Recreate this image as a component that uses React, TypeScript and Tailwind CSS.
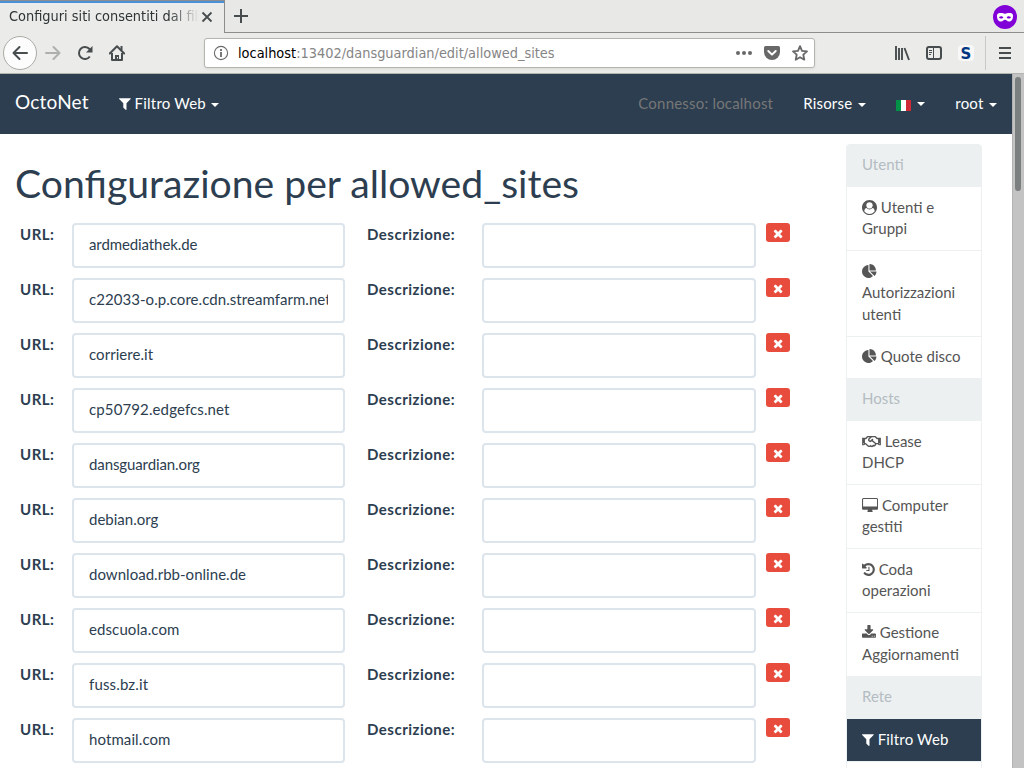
import type { ReactNode } from "react";
import { FaRegHandshake } from "react-icons/fa";

const glyphs = {
  filter: {
    x: 192,
    w: 1408,
    d: "M1595 295q17 41-14 70l-493 493v742q0 42-39 59-13 5-25 5-27 0-45-19l-256-256q-19-19-19-45v-486l-493-493q-31-29-14-70 17-39 59-39h1280q42 0 59 39z",
  },
  times: {
    x: 192,
    w: 1408,
    d: "M1490 1322q0 40-28 68l-136 136q-28 28-68 28t-68-28l-294-294-294 294q-28 28-68 28t-68-28l-136-136q-28-28-28-68t28-68l294-294-294-294q-28-28-28-68t28-68l136-136q28-28 68-28t68 28l294 294 294-294q28-28 68-28t68 28l136 136q28 28 28 68t-28 68l-294 294 294 294q28 28 28 68z",
  },
  user: {
    x: 0,
    w: 1792,
    d: "M1523 1339q-22-155-87.5-257.5t-184.5-118.5q-67 74-159.5 115.5t-195.5 41.5-195.5-41.5-159.5-115.5q-119 16-184.5 118.5t-87.5 257.5q106 150 271 237.5t356 87.5 356-87.5 271-237.5zm-243-699q0-159-112.5-271.5t-271.5-112.5-271.5 112.5-112.5 271.5 112.5 271.5 271.5 112.5 271.5-112.5 112.5-271.5zm512 256q0 182-71 347.5t-190.5 286-285.5 191.5-349 71q-182 0-348-71t-286-191-191-286-71-348 71-348 191-286 286-191 348-71 348 71 286 191 191 286 71 348z",
  },
  pie: {
    x: 0,
    w: 1792,
    d: "M768 890l546 546q-106 108-247.5 168t-298.5 60q-209 0-385.5-103t-279.5-279.5-103-385.5 103-385.5 279.5-279.5 385.5-103v762zm187 6h773q0 157-60 298.5t-168 247.5zm709-128h-768v-768q209 0 385.5 103t279.5 279.5 103 385.5z",
  },
  desktop: {
    x: -64,
    w: 1920,
    d: "M1728 992v-832q0-13-9.5-22.5t-22.5-9.5h-1600q-13 0-22.5 9.5t-9.5 22.5v832q0 13 9.5 22.5t22.5 9.5h1600q13 0 22.5-9.5t9.5-22.5zm128-832v1088q0 66-47 113t-113 47h-544q0 37 16 77.5t32 71 16 43.5q0 26-19 45t-45 19h-512q-26 0-45-19t-19-45q0-14 16-44t32-70 16-78h-544q-66 0-113-47t-47-113v-1088q0-66 47-113t113-47h1600q66 0 113 47t47 113z",
  },
  history: {
    x: 128,
    w: 1536,
    d: "M1664 896q0 156-61 298t-164 245-245 164-298 61q-172 0-327-72.5t-264-204.5q-7-10-6.5-22.5t8.5-20.5l137-138q10-9 25-9 16 2 23 12 73 95 179 147t225 52q104 0 198.5-40.5t163.5-109.5 109.5-163.5 40.5-198.5-40.5-198.5-109.5-163.5-163.5-109.5-198.5-40.5q-98 0-188 35.5t-160 101.5l137 138q31 30 14 69-17 40-59 40h-448q-26 0-45-19t-19-45v-448q0-42 40-59 39-17 69 14l130 129q107-101 244.5-156.5t284.5-55.5q156 0 298 61t245 164 164 245 61 298zm-640-288v448q0 14-9 23t-23 9h-320q-14 0-23-9t-9-23v-64q0-14 9-23t23-9h224v-352q0-14 9-23t23-9h64q14 0 23 9t9 23z",
  },
  download: {
    x: 64,
    w: 1664,
    d: "M1344 1344q0-26-19-45t-45-19-45 19-19 45 19 45 45 19 45-19 19-45zm256 0q0-26-19-45t-45-19-45 19-19 45 19 45 45 19 45-19 19-45zm128-224v320q0 40-28 68t-68 28h-1472q-40 0-68-28t-28-68v-320q0-40 28-68t68-28h465l135 136q58 56 136 56t136-56l136-136h464q40 0 68 28t28 68zm-325-569q17 41-14 70l-448 448q-18 19-45 19t-45-19l-448-448q-31-29-14-70 17-39 59-39h256v-448q0-26 19-45t45-19h256q26 0 45 19t19 45v448h256q42 0 59 39z",
  },
};

type GlyphName = keyof typeof glyphs;

function Glyph({ name, className = "h-[15px]" }: { name: GlyphName; className?: string }) {
  const g = glyphs[name];
  return (
    <svg viewBox={`${g.x} 0 ${g.w} 1792`} fill="currentColor" className={`inline-block w-auto align-[-2px] ${className}`}>
      <path d={g.d} />
    </svg>
  );
}

function Caret() {
  return <span className="ml-[5.5px] inline-block border-x-4 border-t-4 border-x-transparent border-t-current align-middle" />;
}

function BrowserChrome() {
  return (
    <div className="flex h-[74px] shrink-0 flex-col border-b border-[#b3b3af] bg-[#ebebe9] font-['DejaVu_Sans_Condensed','DejaVu_Sans',sans-serif] text-[14.4px] text-[#2e3436]">
      <div className="flex h-[33px] shrink-0">
        <div className="flex h-[33px] w-[225px] items-center border-r border-t border-[#8d8d8b] pl-[9px] shadow-[inset_0_2px_0_#4a90d9]">
          <span className="w-[188px] overflow-hidden whitespace-nowrap [mask-image:linear-gradient(to_right,black_160px,transparent_190px)]">
            Configuri siti consentiti dal filtro
          </span>
          <svg className="ml-1 size-3" viewBox="0 0 12 12" fill="none" stroke="#474c4e" strokeWidth="1.8">
            <path d="M1.5 1.5l9 9M10.5 1.5l-9 9" />
          </svg>
        </div>
        <div className="flex flex-1 items-center justify-between border-b border-[#8d8d8b] bg-[#e8e8e6] pl-[9px] pr-[7px]">
          <svg className="size-[14px]" viewBox="0 0 14 14" fill="none" stroke="#474c4e" strokeWidth="2">
            <path d="M7 0v14M0 7h14" />
          </svg>
          <svg className="mt-[2px] size-6" viewBox="0 0 24 24">
            <circle cx="12" cy="12" r="12" fill="#8000d7" />
            <path
              fill="#fff"
              fillRule="evenodd"
              d="M12 9C10 8 4 7 4 10.500c0 3.500 1 6 4 6 2 0 2.600-1.700 4-1.700s2 1.700 4 1.700c3 0 4-2.500 4-6C20 7 14 8 12 9zM8.300 13.600c-1.200 0-2-.7-2.300-1.300.6-.7 1.300-1 2.300-1s1.800.6 2 1.200c-.3.600-1 1.100-2 1.100zm7.400 0c-1 0-1.700-.5-2-1.100.2-.6 1-1.200 2-1.200s1.700.3 2.300 1c-.3.600-1.100 1.300-2.300 1.300z"
            />
          </svg>
        </div>
      </div>
      <div className="flex h-10 items-center">
        <div className="ml-[3px] flex size-[34px] items-center justify-center rounded-full border border-[#aaaaa6] bg-[#fcfcfc]">
          <svg className="size-4" viewBox="0 0 16 16" fill="none" stroke="#474c4e" strokeWidth="2" strokeLinecap="round" strokeLinejoin="round">
            <path d="M15 8H1.500M7.500 2l-6 6 6 6" />
          </svg>
        </div>
        <svg className="ml-2 size-4" viewBox="0 0 16 16" fill="none" stroke="#aeb0ae" strokeWidth="2" strokeLinecap="round" strokeLinejoin="round">
          <path d="M1 8h13.500M8.500 2l6 6-6 6" />
        </svg>
        <svg className="ml-4 size-4" viewBox="0 0 16 16" fill="none" stroke="#474c4e" strokeWidth="2">
          <path d="M12.800 11.500A6 6 0 1 1 12.500 4l1 1" />
          <path d="M15.500 1v6.500H9z" fill="#474c4e" stroke="none" />
        </svg>
        <svg className="ml-4 size-4" viewBox="0 0 16 16" fill="none" stroke="#474c4e" strokeWidth="2" strokeLinejoin="round">
          <path d="M.8 8.500L8 1.300l7.200 7.200" strokeLinecap="round" />
          <path d="M3 8v7h10V8M12.500 1v4" />
          <path d="M6 15v-5h4v5z" fill="#474c4e" stroke="none" />
          <path d="M8.500 12v1.500" stroke="#fff" strokeWidth="1" />
        </svg>
        <div className="ml-[79px] flex h-[30px] w-[611px] items-center rounded-[3px] border border-[#b4b4b0] bg-white pl-2 pr-[6px] shadow-[0_1px_3px_rgba(0,0,0,0.08)]">
          <svg className="size-4" viewBox="0 0 16 16" fill="none" stroke="#6b6b6b">
            <circle cx="8" cy="8" r="6.600" strokeWidth="1.100" />
            <path d="M8 7v5M8 4v2" strokeWidth="1.800" />
          </svg>
          <span className="ml-[9px] flex-1 whitespace-nowrap pt-px text-[#858585]">
            <span className="text-black">localhost</span>:13402/dansguardian/edit/allowed_sites
          </span>
          <svg className="size-4" viewBox="0 0 16 16" fill="#686868">
            <circle cx="2" cy="8" r="2" />
            <circle cx="8" cy="8" r="2" />
            <circle cx="14" cy="8" r="2" />
          </svg>
          <svg className="ml-3 size-4" viewBox="0 0 16 16">
            <path d="M1.500 1h13Q16 1 16 2.500V7a8 8 0 0 1-16 0V2.500Q0 1 1.500 1z" fill="#686868" />
            <path d="M4.300 6L8 9.600 11.700 6" fill="none" stroke="#fff" strokeWidth="2" strokeLinecap="round" strokeLinejoin="round" />
          </svg>
          <svg className="ml-3 size-4" viewBox="0 0 16 16" fill="none" stroke="#686868" strokeWidth="1.800" strokeLinejoin="round">
            <path d="M8 1.200l2 4.600 5 .5-3.700 3.400 1 5L8 12.200l-4.300 2.500 1-5L1 6.300l5-.5z" />
          </svg>
        </div>
        <svg className="ml-[79px] size-4" viewBox="0 0 16 16" fill="none" stroke="#474c4e">
          <path d="M2 1v14M5 3v12M8 3v12M10.500 3l4.500 12" strokeWidth="1.900" />
        </svg>
        <svg className="ml-4 size-4" viewBox="0 0 16 16" fill="none" stroke="#474c4e">
          <rect x="1" y="2" width="14" height="12" rx="2" strokeWidth="2" />
          <path d="M7.500 2v12M3 5.500h3M3 7.500h3M3 9.500h2" />
        </svg>
        <div className="ml-4 flex size-4 items-center justify-center rounded-sm bg-[#f8f8f8] pt-px font-['DejaVu_Sans',sans-serif] text-[15px] font-bold leading-4 text-[#003580]">
          S
        </div>
        <div className="ml-[11px] h-[34px] w-px bg-[#c8c8c4]" />
        <svg className="ml-[13px] h-3 w-3" viewBox="0 0 12 12" stroke="#474c4e" strokeWidth="2">
          <path d="M0 1h12M0 6h12M0 11h12" />
        </svg>
      </div>
    </div>
  );
}

function Navbar() {
  return (
    <nav className="flex h-[60px] items-center bg-[#2c3e50] px-[15px] tracking-[0.2px] text-white">
      <span className="mt-[-5px] text-[19px]">OctoNet</span>
      <span className="ml-[30px]">
        <Glyph name="filter" /> Filtro Web
        <Caret />
      </span>
      <span className="ml-auto text-[#777777]">Connesso: localhost</span>
      <span className="ml-[30px]">
        Risorse
        <Caret />
      </span>
      <span className="ml-[30px] flex items-center">
        <svg className="mr-px mt-[2px] h-[11px] w-[15px]" viewBox="0 0 15 11">
          <path fill="#009246" d="M0 0h5v11H0z" />
          <path fill="#fff" d="M5 0h5v11H5z" />
          <path fill="#ce2b37" d="M10 0h5v11h-5z" />
        </svg>
        <Caret />
      </span>
      <span className="ml-[30px]">
        root
        <Caret />
      </span>
    </nav>
  );
}

const sites = [
  { url: "ardmediathek.de", tracking: "tracking-[-0.1px]" },
  { url: "c22033-o.p.core.cdn.streamfarm.net", tracking: "tracking-[0.05px]" },
  { url: "corriere.it", tracking: "tracking-[0.05px]" },
  { url: "cp50792.edgefcs.net", tracking: "tracking-[0.12px]" },
  { url: "dansguardian.org", tracking: "tracking-[-0.1px]" },
  { url: "debian.org", tracking: "tracking-normal" },
  { url: "download.rbb-online.de", tracking: "tracking-[0.03px]" },
  { url: "edscuola.com", tracking: "tracking-[0.1px]" },
  { url: "fuss.bz.it", tracking: "tracking-[0.15px]" },
  { url: "hotmail.com", tracking: "tracking-[0.1px]" },
];

function SiteRow({ url, tracking }: { url: string; tracking: string }) {
  return (
    <div className="mb-[10px] flex h-[45px] items-start">
      <label className="w-[57px] pl-[5px] pt-px font-bold tracking-[0.5px]">URL:</label>
      <div className="flex h-[45px] w-[273px] items-center rounded border-2 border-[#dce4ec] px-[15px] pb-[2px]">
        <span className={`flex-1 overflow-hidden whitespace-nowrap ${tracking}`}>{url}</span>
      </div>
      <label className="ml-[22px] w-[115px] pt-px font-bold tracking-[0.5px]">Descrizione:</label>
      <div className="h-[45px] w-[274px] rounded border-2 border-[#dce4ec]" />
      <button className="ml-[10px] flex h-[19px] w-6 items-center justify-center rounded-[3px] bg-[#e74c3c] pt-px text-white">
        <Glyph name="times" className="h-[13px]" />
      </button>
    </div>
  );
}

function SideHeading({ children, className = "" }: { children: ReactNode; className?: string }) {
  return (
    <div className={`-mb-px border border-[#ecf0f1] bg-[#ecf0f1] px-[15px] pb-[10.6px] pt-[9.4px] text-[#b4bcc2] ${className}`}>
      {children}
    </div>
  );
}

function SideItem({ icon, children }: { icon: ReactNode; children: ReactNode }) {
  return (
    <div className="-mb-px border border-[#ecf0f1] px-[15px] pb-[10.6px] pt-[9.4px] text-[#555555]">
      {icon} {children}
    </div>
  );
}

function Sidebar() {
  return (
    <aside className="mt-[10px] w-[136px]">
      <SideHeading className="rounded-t">Utenti</SideHeading>
      <SideItem icon={<Glyph name="user" />}>Utenti e Gruppi</SideItem>
      <SideItem icon={<Glyph name="pie" />}>Autorizzazioni utenti</SideItem>
      <SideItem icon={<Glyph name="pie" />}>Quote disco</SideItem>
      <SideHeading>Hosts</SideHeading>
      <SideItem icon={<FaRegHandshake className="inline-block h-[15px] w-[19px] align-[-2px]" />}>Lease DHCP</SideItem>
      <SideItem icon={<Glyph name="desktop" />}>Computer gestiti</SideItem>
      <SideItem icon={<Glyph name="history" />}>Coda operazioni</SideItem>
      <SideItem icon={<Glyph name="download" />}>Gestione Aggiornamenti</SideItem>
      <SideHeading>Rete</SideHeading>
      <div className="border border-[#ecf0f1] bg-[#2c3e50] px-[15px] pb-[10.6px] pt-[9.4px] tracking-[0.15px] text-white">
        <Glyph name="filter" /> Filtro Web
      </div>
      <div className="h-8 border-x border-[#ecf0f1]" />
    </aside>
  );
}

export default function App() {
  return (
    <div className="flex h-[768px] w-[1024px] flex-col overflow-hidden bg-white">
      <BrowserChrome />
      <div className="flex min-h-0 flex-1">
        <div className="w-[1012px] overflow-hidden font-['Lato',sans-serif] text-[15px] leading-[21.43px] text-[#2c3e50]">
          <Navbar />
          <div className="flex">
            <main className="w-[846px] pl-[15px]">
              <h1 className="mb-[19px] mt-[27px] h-[43px] text-[39.15px] leading-[43px]">Configurazione per allowed_sites</h1>
              {sites.map((site) => (
                <SiteRow key={site.url} url={site.url} tracking={site.tracking} />
              ))}
            </main>
            <Sidebar />
          </div>
        </div>
        <div className="w-3 border-l border-[#b1b2b1] bg-[#c2c3c2] pl-[2px] pt-[3px]">
          <div className="h-[114px] w-[6px] rounded-full bg-[#7b7f7f]" />
        </div>
      </div>
    </div>
  );
}
